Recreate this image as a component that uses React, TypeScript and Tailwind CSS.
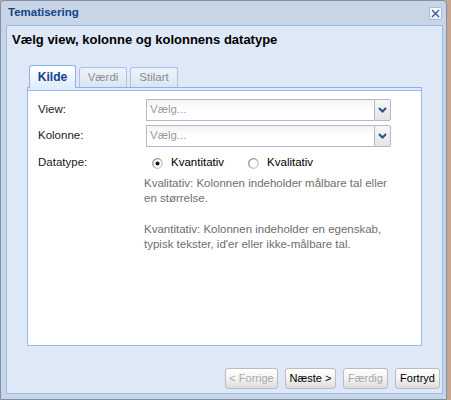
import { useState } from "react"

const tabs = ["Kilde", "Værdi", "Stilart"]

function Chevron() {
  return (
    <svg width="9" height="6" viewBox="0 0 9 6">
      <path d="M1 1 L4.5 4.5 L8 1" fill="none" stroke="#2b4e8c" strokeWidth="2" />
    </svg>
  )
}

function Combo() {
  return (
    <div className="flex w-[245px] h-[22px]">
      <div className="flex-1 flex items-center pl-[3px] border border-[#b5b8c8] border-r-0 bg-gradient-to-b from-[#f4f4f4] via-white to-white text-[#999999]">
        Vælg...
      </div>
      <div className="w-[17px] flex items-center justify-center border border-[#b5b8c8] rounded-r-[2px] bg-gradient-to-b from-[#f7f7f7] to-[#e4e4e4]">
        <Chevron />
      </div>
    </div>
  )
}

function Radio({ checked }: { checked: boolean }) {
  return (
    <svg width="11" height="11" viewBox="0 0 11 11">
      <defs>
        <linearGradient id="rg" x1="0" y1="0" x2="1" y2="1">
          <stop offset="0" stopColor="#6f6f6f" />
          <stop offset="1" stopColor="#e2e2e2" />
        </linearGradient>
      </defs>
      <circle cx="5.5" cy="5.5" r="4.8" fill="#ffffff" stroke="url(#rg)" strokeWidth="1.2" />
      {checked && <circle cx="5.5" cy="5.5" r="2" fill="#111111" />}
    </svg>
  )
}

function Btn({ label, w, disabled }: { label: string; w: string; disabled?: boolean }) {
  return (
    <button
      className={`${w} h-[21px] border border-[#bcbcbc] rounded-[3px] bg-gradient-to-b from-white via-[#f3f3f3] to-[#dcdcdc] text-[11px] ${
        disabled ? "text-[#a8a8a8]" : "text-black"
      }`}
    >
      {label}
    </button>
  )
}

export default function App() {
  const [tab, setTab] = useState("Kilde")
  const [kind, setKind] = useState("kvant")

  return (
    <div className="w-[451px] h-[400px] flex bg-[#c7a58f] font-['Liberation_Sans',Arial,sans-serif] text-[11.5px] text-[#1a1a1a]">
      <div className="w-[447px] h-[400px] flex flex-col border border-[#7f90a8] rounded-t-[4px] bg-[#c8d5e7] pl-[5px] pr-[3px] pb-[5px]">
        <div className="h-[24px] flex items-center justify-between pl-[2px] pr-[1px]">
          <span className="font-bold text-[#15428b] text-[11.5px]">Tematisering</span>
          <button className="w-[13px] h-[13px] flex items-center justify-center rounded-[2px] border border-[#a9bfde] bg-gradient-to-b from-white to-[#e3ecf8]">
            <svg width="9" height="9" viewBox="0 0 9 9">
              <path d="M1 1 L8 8 M8 1 L1 8" stroke="#3b5a94" strokeWidth="1.4" />
            </svg>
          </button>
        </div>

        <div className="flex-1 flex flex-col border border-[#99bbe8] bg-[#dfe8f6]">
          <div className="pt-[6px] pl-[5px] leading-[16px] text-[13px] font-bold text-black">
            Vælg view, kolonne og kolonnens datatype
          </div>

          <div className="mx-[20px] mt-[17px]">
            <div className="h-[23px] flex items-end gap-[3px] pl-[2px] border-b border-[#8db2e3]">
              {tabs.map((t) =>
                t === tab ? (
                  <div
                    key={t}
                    onClick={() => setTab(t)}
                    className="relative w-[47px] h-[23px] -mb-px flex items-center justify-center border border-b-0 border-[#8db2e3] rounded-t-[3px] bg-gradient-to-b from-white to-[#deecfd] font-bold text-[#15428b] text-[12px]"
                  >
                    {t}
                  </div>
                ) : (
                  <div
                    key={t}
                    onClick={() => setTab(t)}
                    className="w-[48px] h-[20px] flex items-center justify-center border border-b-0 border-[#a9c2e6] rounded-t-[3px] bg-gradient-to-b from-[#eef3fa] to-[#d9e5f5] text-[#8d8d8d]"
                  >
                    {t}
                  </div>
                ),
              )}
            </div>
            <div className="h-[2px] bg-[#deecfd] border-x border-[#8db2e3]" />
            <div className="h-[256px] border border-[#99bbe8] bg-white pt-[8px] pl-[10px]">
              <div className="flex items-center h-[22px]">
                <span className="w-[108px]">View:</span>
                <Combo />
              </div>
              <div className="flex items-center h-[22px] mt-[4px]">
                <span className="w-[108px]">Kolonne:</span>
                <Combo />
              </div>
              <div className="flex items-center h-[22px] mt-[5px]">
                <span className="w-[108px]">Datatype:</span>
                <label className="flex items-center ml-[6px]" onClick={() => setKind("kvant")}>
                  <Radio checked={kind === "kvant"} />
                  <span className="ml-[8px] text-black">Kvantitativ</span>
                </label>
                <label className="flex items-center ml-[24px]" onClick={() => setKind("kval")}>
                  <Radio checked={kind === "kval"} />
                  <span className="ml-[8px] text-black">Kvalitativ</span>
                </label>
              </div>
              <div className="ml-[106px] mt-[2px] leading-[15px] text-[#6e6e6e] whitespace-nowrap">
                <p className="mb-[16px]">
                  Kvalitativ: Kolonnen indeholder målbare tal eller
                  <br />
                  en størrelse.
                </p>
                <p>
                  Kvantitativ: Kolonnen indeholder en egenskab,
                  <br />
                  typisk tekster, id'er eller ikke-målbare tal.
                </p>
              </div>
            </div>
          </div>

          <div className="mt-[22px] flex justify-end gap-[7px] pr-[2px]">
            <Btn label="< Forrige" w="w-[53px]" disabled />
            <Btn label="Næste >" w="w-[51px]" />
            <Btn label="Færdig" w="w-[45px]" disabled />
            <Btn label="Fortryd" w="w-[45px]" />
          </div>
        </div>
      </div>
    </div>
  )
}
